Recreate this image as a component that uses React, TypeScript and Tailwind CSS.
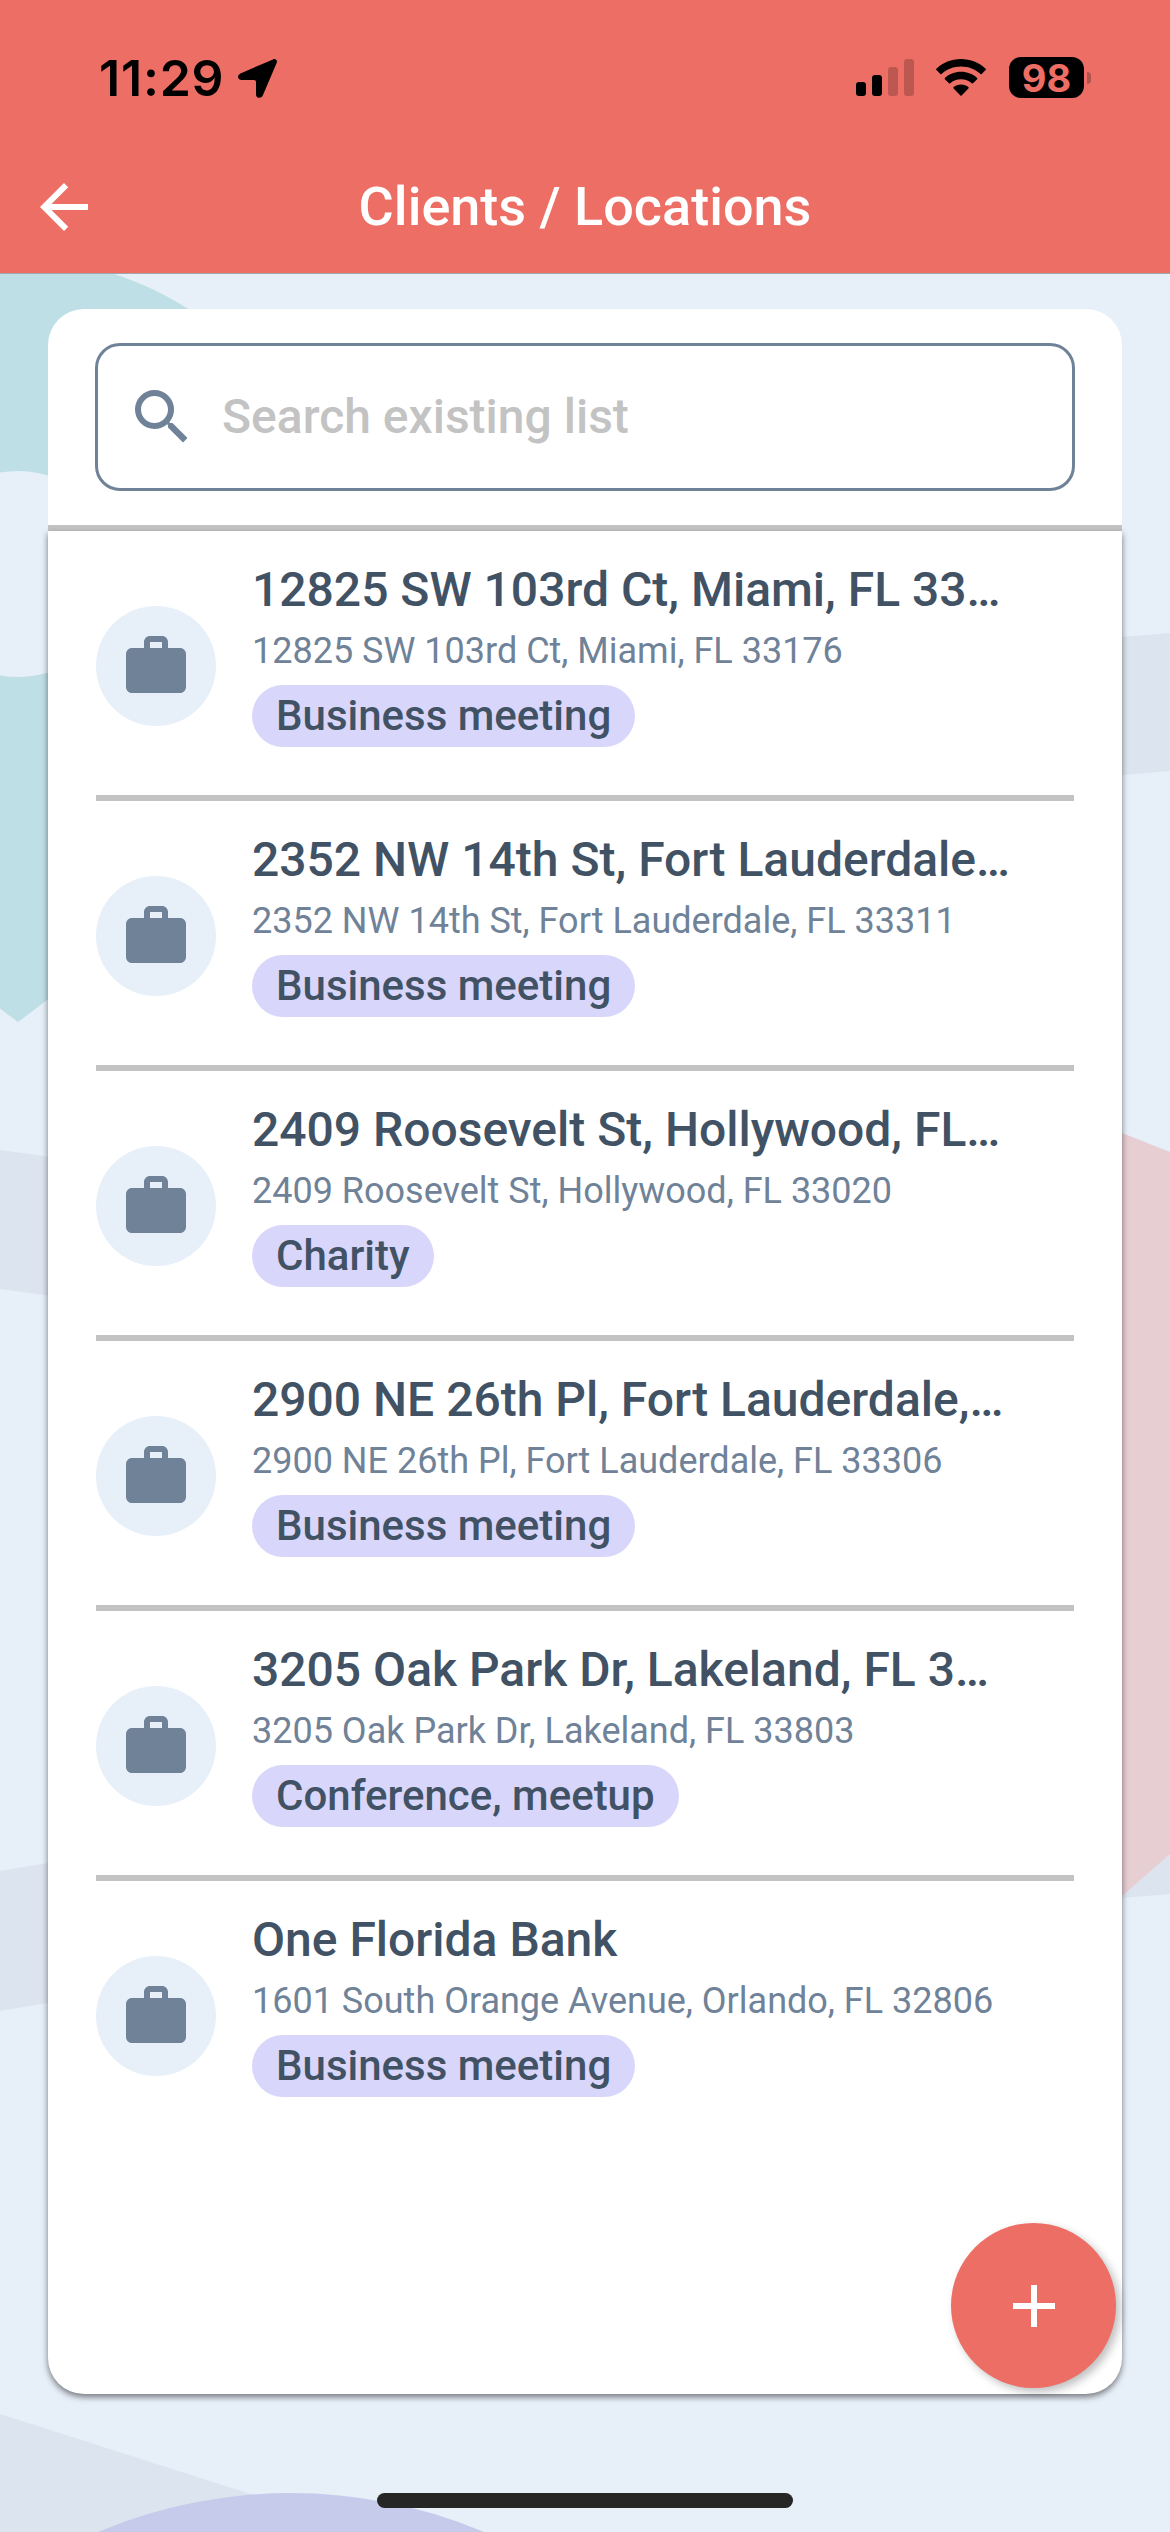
import { MdAdd, MdArrowBack, MdSearch, MdWork } from "react-icons/md";

type Client = {
  name: string;
  address: string;
  category: string;
};

const CLIENTS: Client[] = [
  {
    name: "12825 SW 103rd Ct, Miami, FL 33…",
    address: "12825 SW 103rd Ct, Miami, FL 33176",
    category: "Business meeting",
  },
  {
    name: "2352 NW 14th St, Fort Lauderdale…",
    address: "2352 NW 14th St, Fort Lauderdale, FL 33311",
    category: "Business meeting",
  },
  {
    name: "2409 Roosevelt St, Hollywood, FL…",
    address: "2409 Roosevelt St, Hollywood, FL 33020",
    category: "Charity",
  },
  {
    name: "2900 NE 26th Pl, Fort Lauderdale,…",
    address: "2900 NE 26th Pl, Fort Lauderdale, FL 33306",
    category: "Business meeting",
  },
  {
    name: "3205 Oak Park Dr, Lakeland, FL 3…",
    address: "3205 Oak Park Dr, Lakeland, FL 33803",
    category: "Conference, meetup",
  },
  {
    name: "One Florida Bank",
    address: "1601 South Orange Avenue, Orlando, FL 32806",
    category: "Business meeting",
  },
];

function MapBackground() {
  return (
    <svg
      viewBox="0 0 1170 2532"
      className="pointer-events-none absolute inset-0 h-full w-full"
      aria-hidden="true"
    >
      {/* roads */}
      <g fill="#dce4ef">
        <path d="M0 1150L600 1231V1370L0 1289Z" />
        <path d="M0 1871L600 1771V1911L0 2011Z" />
        <path d="M600 681L1170 633V771L600 819Z" />
        <path d="M600 1800H1170V1894L600 1941Z" />
        <path d="M0 2414L370 2532H0Z" />
      </g>
      {/* pins */}
      <path
        fill="#bfdfe7"
        fillRule="evenodd"
        d="M18 259A315 315 0 0 1 333 574C333 720 230 866 18 1022C-194 866 -297 720 -297 574A315 315 0 0 1 18 259ZM18 471A103 103 0 1 0 18 677A103 103 0 1 0 18 471Z"
      />
      <path fill="#e7ced2" d="M1000 1118Q1060 1115 1122 1133L1170 1152V1854L1122 1896L1000 1990Z" />
      <circle cx="291" cy="2989" r="496" fill="#c7cbeb" />
    </svg>
  );
}

function StatusBar() {
  return (
    <div className="flex h-[141px] items-start justify-between pl-[99px] pr-[79px] pt-[57px] text-black">
      <div className="flex items-start">
        <span className="w-[139px] font-[Inter] text-[50px] font-semibold leading-[43px] tracking-[0.8px]">
          11:29
        </span>
        <svg viewBox="0 0 39 39" className="mt-[2px] h-[39px] w-[39px]">
          <path
            fill="currentColor"
            d="M35 .4C37.600-.8 39.800 1.400 38.600 4L24.800 36.600C23.200 40 18 39.400 18 35.400V23C18 21.700 17.300 21 16 21H3.600C-.4 21-1.200 16 2.400 14.400Z"
          />
        </svg>
      </div>
      <div className="flex items-start">
        <div className="mt-[2px] flex h-[37px] items-end gap-[6px]">
          <span className="h-[14px] w-[10px] rounded-[3px] bg-black" />
          <span className="h-[21px] w-[10px] rounded-[3px] bg-black" />
          <span className="h-[29px] w-[10px] rounded-[3px] bg-black/20" />
          <span className="h-[37px] w-[10px] rounded-[3px] bg-black/20" />
        </div>
        <svg viewBox="0 0 50 37" className="ml-[22px] mt-[2px] h-[37px] w-[50px]">
          <g fill="currentColor">
            <path d="M25 0C34.500 0 43.200 3.600 49.600 9.700Q50.300 10.400 49.600 11.100L45.600 15.100Q45 15.600 44.400 15C39.200 10.200 32.400 7.500 25 7.500S10.800 10.200 5.600 15Q5 15.600 4.400 15.100L.4 11.100Q-.3 10.400 .4 9.700C6.800 3.600 15.500 0 25 0Z" />
            <path d="M25 12.800C31.300 12.800 36.900 15.100 41.100 18.900Q41.700 19.500 41.100 20.200L37 24.300Q36.400 24.800 35.800 24.200C32.900 21.800 29.200 20.300 25 20.300S17.100 21.800 14.200 24.200Q13.600 24.800 13 24.300L8.900 20.200Q8.300 19.500 8.900 18.900C13.100 15.100 18.700 12.800 25 12.800Z" />
            <path d="M25 25.500C27.900 25.500 30.500 26.500 32.400 28.100Q33.100 28.800 32.400 29.500L25.600 36.400Q25 37 24.400 36.400L17.600 29.500Q16.900 28.800 17.600 28.100C19.500 26.500 22.100 25.500 25 25.500Z" />
          </g>
        </svg>
        <div className="ml-[23px] flex items-center gap-[3px]">
          <div className="flex h-[41px] w-[75px] items-center justify-center rounded-[12px] bg-black font-[Inter] text-[38px] font-bold leading-none text-[#ed6e64]">
            98
          </div>
          <span className="h-[12px] w-[4px] rounded-r-full bg-[#b1544d]" />
        </div>
      </div>
    </div>
  );
}

function Header() {
  return (
    <header className="relative h-[274px] border-b border-[#a0a5b0] bg-[#ed6e64]">
      <StatusBar />
      <div className="flex h-[132px] items-center px-[28px]">
        <button type="button" aria-label="Back" className="text-white">
          <MdArrowBack className="h-[72px] w-[72px]" />
        </button>
        <h1 className="flex-1 pr-[72px] text-center text-[54px] font-medium leading-none text-white">
          Clients / Locations
        </h1>
      </div>
    </header>
  );
}

function ClientRow({ client }: { client: Client }) {
  return (
    <li className="flex h-[270px] items-start border-b-[6px] border-[#c3c3c3] last:border-b-0">
      <div className="mt-[75px] flex h-[120px] w-[120px] shrink-0 items-center justify-center rounded-full bg-[#e7eff8] text-[#6f8298]">
        <MdWork className="h-[72px] w-[72px]" />
      </div>
      <div className="ml-9 flex flex-col items-start whitespace-nowrap">
        <p className="mt-[31px] text-[48px] font-medium leading-[56px] text-[#415265]">
          {client.name}
        </p>
        <p className="mt-[12px] text-[36px] leading-[42px] text-[#6f8298]">
          {client.address}
        </p>
        <span className="mt-[13px] flex h-[62px] items-center rounded-full bg-[#d9d6fb] px-6 text-[42px] font-medium leading-none text-[#415265]">
          {client.category}
        </span>
      </div>
    </li>
  );
}

export default function App() {
  return (
    <div className="relative flex h-[2532px] w-[1170px] flex-col overflow-hidden bg-[#e7eff8] font-[Roboto,sans-serif]">
      <MapBackground />
      <Header />
      <main className="relative mx-12 mt-[35px] flex h-[2085px] flex-col">
        <div className="rounded-t-[36px] border-b-[6px] border-[#c3c3c3] bg-white px-[47px] pb-[34px] pt-[34px]">
          <label className="flex h-[148px] items-center rounded-[25px] border-[3px] border-[#6f8298] pl-[28px]">
            <MdSearch className="h-[72px] w-[72px] text-[#6f8298]" />
            <input
              type="text"
              placeholder="Search existing list"
              className="ml-[24px] flex-1 text-[48px] font-medium leading-[56px] outline-none placeholder:text-[#c3c3c3]"
            />
          </label>
        </div>
        <ul className="relative flex-1 rounded-b-[36px] bg-white px-12 shadow-[0_3px_6px_rgba(0,0,0,0.5)]">
          {CLIENTS.map((client) => (
            <ClientRow key={client.address} client={client} />
          ))}
        </ul>
        <button
          type="button"
          aria-label="Add client"
          className="absolute bottom-[6px] right-[6px] flex h-[165px] w-[165px] items-center justify-center rounded-full bg-[#ed6e64] text-white shadow-[4px_4px_9px_rgba(0,0,0,0.25)]"
        >
          <MdAdd className="h-[72px] w-[72px]" />
        </button>
      </main>
      <div className="relative mx-auto mt-[99px] h-[15px] w-[416px] rounded-full bg-[#262626]" />
    </div>
  );
}
